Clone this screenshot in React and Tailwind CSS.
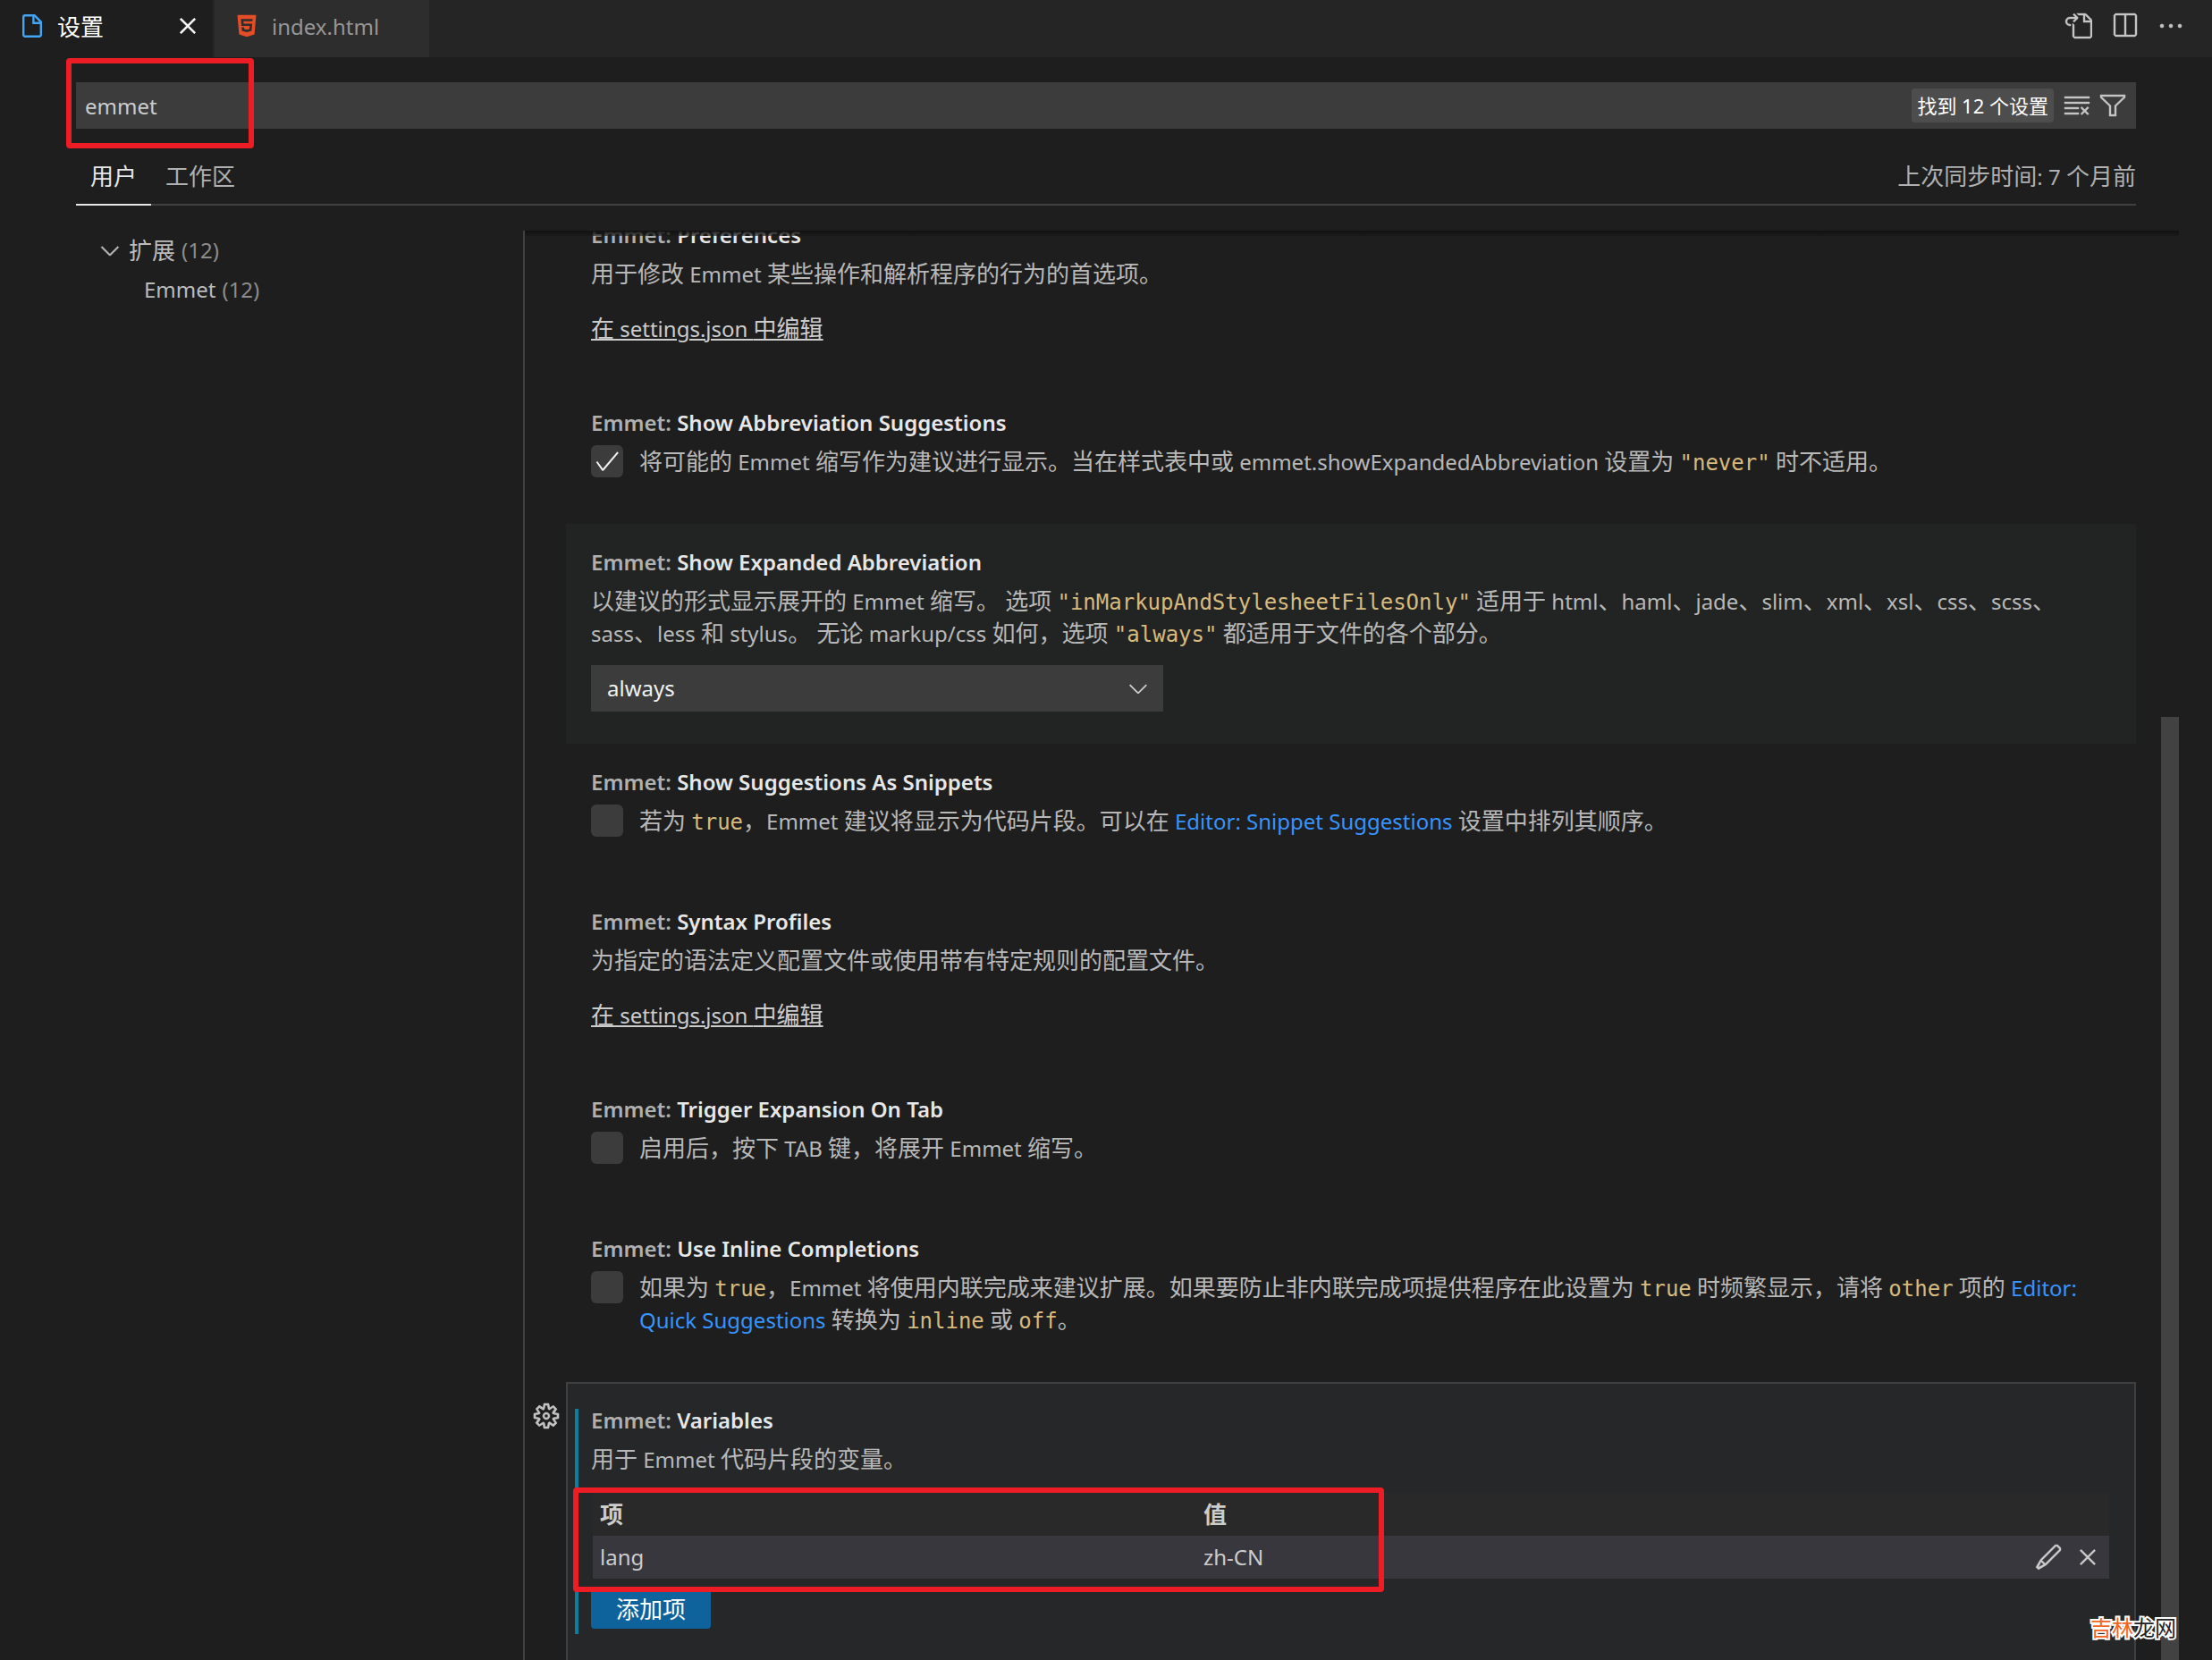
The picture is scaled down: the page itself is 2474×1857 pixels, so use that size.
import React from "react";
import {
  VscGoToFile,
  VscSplitHorizontal,
  VscEllipsis,
  VscClearAll,
  VscFilter,
  VscGear,
  VscEdit,
  VscClose,
  VscChevronDown,
  VscCheck,
} from "react-icons/vsc";
import { FaHtml5 } from "react-icons/fa";

/* Mixed-script text: CJK runs keep the parent's size, Latin runs are optically matched. */
function Mixed({ children }) {
  return String(children)
    .split(/([\x20-\x7e]+)/)
    .map((part, i) =>
      i % 2 ? (
        <span key={i} className="text-[24px] leading-none">
          {part}
        </span>
      ) : (
        part
      )
    );
}

function Code({ children }) {
  return (
    <code className="font-['DejaVu_Sans_Mono',monospace] text-[24px] leading-none text-[#d7ba7d]">
      {children}
    </code>
  );
}

function Link({ children }) {
  return (
    <a href="#setting" className="text-[24px] leading-none text-[#3794ff]">
      {children}
    </a>
  );
}

function FileIcon() {
  return (
    <svg viewBox="0 0 22 26" className="ml-[5px] h-[26px] w-[22px]" fill="none" stroke="#42a5f5" strokeWidth="2.4">
      <path d="M3 1.2h10.6l7.2 7.4V23a1.8 1.8 0 0 1-1.8 1.8H3A1.8 1.8 0 0 1 1.2 23V3A1.8 1.8 0 0 1 3 1.2z" />
      <path d="M12.4 1.5v8.3h8.3" />
    </svg>
  );
}

function Title({ id, children }) {
  return (
    <h3 id={id} className="mb-[7px] text-[24px] leading-[36px] font-semibold text-[#e7e7e7]">
      <span className="text-[#b0b0b0]">Emmet: </span>
      {children}
    </h3>
  );
}

function Setting({ title, id, className = "", children }) {
  return (
    <section className={`px-7 pt-[25px] ${className}`}>
      <Title id={id}>{title}</Title>
      {children}
    </section>
  );
}

function CheckSetting({ title, id, checked = false, children }) {
  return (
    <Setting title={title} className="pb-[52px]">
      <div className="flex items-start">
        <span className="relative mr-[18px] size-9 shrink-0">
          <input
            id={id}
            type="checkbox"
            defaultChecked={checked}
            className="peer block size-9 appearance-none rounded-md bg-[#3c3c3c]"
          />
          <VscCheck className="pointer-events-none absolute inset-0 m-auto hidden size-8 text-[#f0f0f0] peer-checked:block" />
        </span>
        <label htmlFor={id}>{children}</label>
      </div>
    </Setting>
  );
}

function JsonSetting({ title, children }) {
  return (
    <Setting title={title} className="pb-[45px]">
      <p>{children}</p>
      <a
        href="#settings-json"
        className="mt-[25px] block w-fit text-[#cccccc] underline decoration-2 underline-offset-2"
      >
        <Mixed>在 settings.json 中编辑</Mixed>
      </a>
    </Setting>
  );
}

function TabBar() {
  return (
    <header className="flex h-16 shrink-0 items-stretch bg-[#252526]">
      <div className="flex w-60 items-center border-r-2 border-[#252526] bg-[#1e1e1e] pb-1.5 pl-5 text-white">
        <FileIcon />
        <span className="ml-[17px] pt-0.5">设置</span>
        <button aria-label="关闭" className="mr-3 ml-auto">
          <VscClose className="size-8 stroke-[0.3]" />
        </button>
      </div>
      <div className="flex w-60 items-center bg-[#2d2d2d] pb-1.5 pl-[22px] text-[#969696]">
        <FaHtml5 className="size-7 text-[#e44d26]" />
        <span className="ml-3.5 pt-0.5 text-[24px]">index.html</span>
      </div>
      <div className="ml-auto flex items-center gap-5 pr-[30px] pb-1.5 text-[#c5c5c5]">
        <button aria-label="打开设置 (json)">
          <VscGoToFile className="size-8 stroke-[0.2]" />
        </button>
        <button aria-label="拆分编辑器">
          <VscSplitHorizontal className="size-8 stroke-[0.2]" />
        </button>
        <button aria-label="更多操作">
          <VscEllipsis className="size-8 stroke-[0.3]" />
        </button>
      </div>
    </header>
  );
}

function SearchHeader() {
  return (
    <div className="mr-[85px] ml-[85px] shrink-0 pt-7">
      <div className="relative flex h-[52px] items-center bg-[#3c3c3c] pr-2.5">
        <input
          aria-label="搜索设置"
          defaultValue="emmet"
          className="h-full min-w-0 flex-1 bg-transparent pl-2.5 text-[24px] text-[#cccccc] outline-none"
        />
        <span className="mr-2.5 rounded bg-[#4d4d4d] px-1.5 text-[22px] leading-[38px] text-white">
          找到 12 个设置
        </span>
        <button aria-label="清除设置搜索输入" className="mr-2 text-[#c5c5c5]">
          <VscClearAll className="size-8 stroke-[0.2]" />
        </button>
        <button aria-label="筛选设置" className="text-[#c5c5c5]">
          <VscFilter className="size-8 stroke-[0.2]" />
        </button>
        <div className="pointer-events-none absolute -top-[27px] -left-[11px] h-[101px] w-[210px] rounded border-[6px] border-[#ee1c25]" />
      </div>
      <div className="mt-6 flex h-[62px] border-b-2 border-[#404040]">
        <div role="tablist" className="-mb-0.5 flex">
          <button
            role="tab"
            aria-selected="true"
            className="border-b-2 border-[#e7e7e7] px-4 pb-0.5 text-[#e7e7e7]"
          >
            用户
          </button>
          <button role="tab" aria-selected="false" className="px-4 pb-1 text-[#b0b0b0]">
            工作区
          </button>
        </div>
        <span className="ml-auto self-center pb-0.5 text-[#b0b0b0]">
          <Mixed>上次同步时间: 7 个月前</Mixed>
        </span>
      </div>
    </div>
  );
}

function Toc() {
  return (
    <nav className="w-[500px] shrink-0 text-[#bbbbbb]">
      <button className="flex h-11 items-center pl-[22px]">
        <VscChevronDown className="mr-[5px] size-8 stroke-[0.2]" />
        <span>扩展</span>
        <span className="ml-[7px] text-[24px] text-[#8c8c8c]">(12)</span>
      </button>
      <button className="flex h-11 items-center pl-[76px] text-[24px]">
        Emmet<span className="ml-[7px] text-[#8c8c8c]">(12)</span>
      </button>
    </nav>
  );
}

function Variables() {
  return (
    <div className="relative">
      <button aria-label="更多操作" className="absolute top-[22px] -left-[38px] text-[#c5c5c5]">
        <VscGear className="size-8 stroke-[0.3]" />
      </button>
      <section className="relative border-2 border-[#3f4041] bg-[#252729] px-[26px] pt-[23px] pb-20">
        <div className="absolute top-7 left-2 h-[252px] w-1 bg-[#0c7d9d]" />
        <Title>Variables</Title>
        <p>
          <Mixed>用于 Emmet 代码片段的变量。</Mixed>
        </p>
        <div className="relative mt-5 mr-0.5 mb-3 ml-0.5">
          <table className="w-full table-fixed text-left text-[#cccccc]">
            <thead>
              <tr className="h-12 bg-[#292929]">
                <th className="w-[675px] pl-2 font-bold">项</th>
                <th className="pl-2 font-bold">值</th>
                <th className="w-24" />
              </tr>
            </thead>
            <tbody>
              <tr className="h-12 bg-[#37373d] text-[24px]">
                <td className="pl-2">lang</td>
                <td className="pl-2">zh-CN</td>
                <td className="pr-2">
                  <div className="flex items-center justify-end gap-3">
                    <button aria-label="编辑项">
                      <VscEdit className="size-8 stroke-[0.2]" />
                    </button>
                    <button aria-label="删除项">
                      <VscClose className="size-8 stroke-[0.2]" />
                    </button>
                  </div>
                </td>
              </tr>
            </tbody>
          </table>
          <div className="pointer-events-none absolute -top-1.5 -left-[22px] z-10 h-[117px] w-[907px] rounded border-[6px] border-[#ee1c25]" />
        </div>
        <button className="h-11 rounded bg-[#0e639c] px-7 text-white">添加项</button>
      </section>
    </div>
  );
}

export default function App() {
  return (
    <div className="flex h-screen flex-col overflow-hidden bg-[#1e1e1e] font-['Noto_Sans','Noto_Sans_CJK_SC',sans-serif] text-[26px] leading-[36px] text-[#b8b8b8]">
      <TabBar />
      <SearchHeader />
      <div className="mt-7 flex min-h-0 flex-1 pl-[85px]">
        <Toc />
        <main className="relative min-w-0 flex-1 overflow-hidden border-l-2 border-[#404040]">
          <div className="-mt-[38px] mr-[85px] ml-[46px]">
            <JsonSetting title="Preferences">
              <Mixed>用于修改 Emmet 某些操作和解析程序的行为的首选项。</Mixed>
            </JsonSetting>
            <CheckSetting id="show-abbr" title="Show Abbreviation Suggestions" checked>
              <Mixed>将可能的 Emmet 缩写作为建议进行显示。当在样式表中或 emmet.showExpandedAbbreviation 设置为 </Mixed>
              <Code>"never"</Code>
              <Mixed> 时不适用。</Mixed>
            </CheckSetting>
            <Setting id="expanded" title="Show Expanded Abbreviation" className="bg-[#222423] pb-9">
              <p>
                <Mixed>以建议的形式显示展开的 Emmet 缩写。 选项 </Mixed>
                <Code>"inMarkupAndStylesheetFilesOnly"</Code>
                <Mixed> 适用于 html、haml、jade、slim、xml、xsl、css、scss、</Mixed>
                <wbr />
                <Mixed>sass、less 和 stylus。 无论 markup/css 如何，选项 </Mixed>
                <Code>"always"</Code>
                <Mixed> 都适用于文件的各个部分。</Mixed>
              </p>
              <div className="relative mt-[18px] w-[640px] max-w-full">
                <select
                  aria-labelledby="expanded"
                  defaultValue="always"
                  className="block h-[52px] w-full appearance-none bg-[#3c3c3c] px-[18px] text-[24px] text-[#f0f0f0]"
                >
                  <option>always</option>
                  <option>never</option>
                  <option>inMarkupAndStylesheetFilesOnly</option>
                </select>
                <VscChevronDown className="pointer-events-none absolute inset-y-0 right-3 my-auto size-8 text-[#d0d0d0]" />
              </div>
            </Setting>
            <CheckSetting id="as-snippets" title="Show Suggestions As Snippets">
              <Mixed>若为 </Mixed>
              <Code>true</Code>
              <Mixed>，Emmet 建议将显示为代码片段。可以在 </Mixed>
              <Link>Editor: Snippet Suggestions</Link>
              <Mixed> 设置中排列其顺序。</Mixed>
            </CheckSetting>
            <JsonSetting title="Syntax Profiles">为指定的语法定义配置文件或使用带有特定规则的配置文件。</JsonSetting>
            <CheckSetting id="trigger" title="Trigger Expansion On Tab">
              <Mixed>启用后，按下 TAB 键，将展开 Emmet 缩写。</Mixed>
            </CheckSetting>
            <CheckSetting id="inline" title="Use Inline Completions">
              <Mixed>如果为 </Mixed>
              <Code>true</Code>
              <Mixed>，Emmet 将使用内联完成来建议扩展。如果要防止非内联完成项提供程序在此设置为 </Mixed>
              <Code>true</Code>
              <Mixed> 时频繁显示，请将 </Mixed>
              <Code>other</Code>
              <Mixed> 项的 </Mixed>
              <Link>Editor: Quick Suggestions</Link>
              <Mixed> 转换为 </Mixed>
              <Code>inline</Code>
              <Mixed> 或 </Mixed>
              <Code>off</Code>。
            </CheckSetting>
            <Variables />
          </div>
          <div className="absolute top-0 right-[37px] left-0 h-1.5 bg-linear-to-b from-[#111111] to-[#191919]/60" />
          <div className="absolute top-[544px] right-[37px] bottom-0 w-5 bg-[#424242]" />
        </main>
      </div>
      <div className="absolute right-10 bottom-[18px] text-[24px] leading-[36px] text-[#222222] [paint-order:stroke_fill] [-webkit-text-stroke:4px_white]">
        <span className="text-[#f26522]">吉林</span>龙网
      </div>
    </div>
  );
}
